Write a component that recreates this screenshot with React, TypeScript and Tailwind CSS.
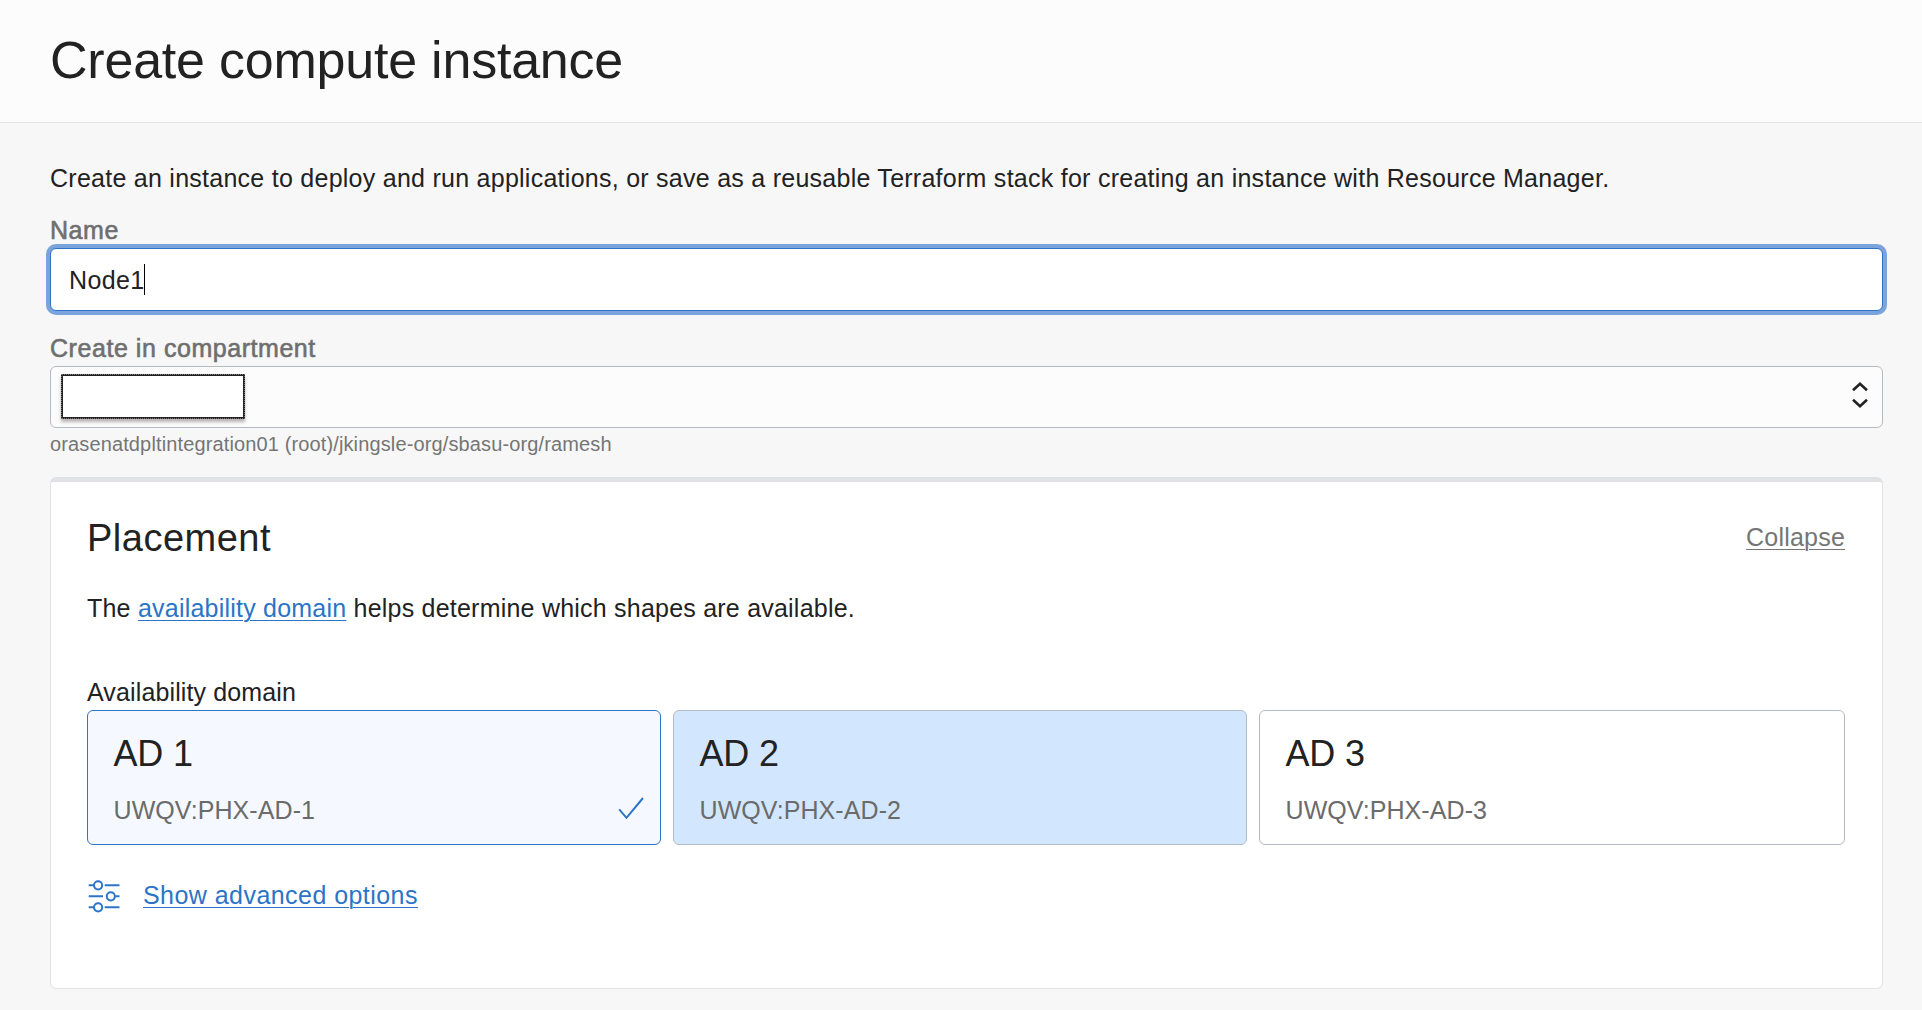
type Domain = { title: string; id: string; box: string; selected?: boolean };

const domains: Domain[] = [
  { title: "AD 1", id: "UWQV:PHX-AD-1", box: "w-[574px] border-[#2b74c7] bg-[#f5f9ff]", selected: true },
  { title: "AD 2", id: "UWQV:PHX-AD-2", box: "w-[574px] border-[#b2bac3] bg-[#d2e7fd]" },
  { title: "AD 3", id: "UWQV:PHX-AD-3", box: "flex-1 border-[#b5b9c1] bg-white" },
];

function CheckIcon() {
  return (
    <svg className="mr-[16px] mb-[23px] shrink-0" width="26" height="24" viewBox="0 0 26 24" fill="none" stroke="#2b74c7" strokeWidth="2">
      <path d="M1.2 12.4 8.5 20.8 25 1" />
    </svg>
  );
}

function SlidersIcon() {
  return (
    <svg className="ml-px shrink-0" width="33" height="33" viewBox="0 0 33 33" fill="none" stroke="#2b74c7" strokeWidth="2">
      <path d="M0.7 5.3H6M16.7 5.3H31.5M0.7 16.3H15M27.5 16.3H31.5M0.7 27.3H6M16.7 27.3H31.5" />
      <circle cx="10.1" cy="5.3" r="4.1" />
      <circle cx="22.8" cy="16.3" r="4.1" />
      <circle cx="10.1" cy="27.3" r="4.1" />
    </svg>
  );
}

function SelectArrows() {
  return (
    <svg className="mr-[14px] mb-[5px]" width="16" height="28" viewBox="0 0 16 28" fill="none" stroke="#222" strokeWidth="2.6">
      <path d="M1 9.3 8 2.8 15 9.3M1 18.7 8 25.2 15 18.7" />
    </svg>
  );
}

function DomainCard({ title, id, box, selected }: Domain) {
  return (
    <div className={`flex h-[135px] items-end justify-between rounded-[6px] border ${box}`}>
      <div className="h-full pt-[23px] pl-[25.5px]">
        <div className="text-[36px] leading-[40px] tracking-[-0.2px]">{title}</div>
        <div className="mt-[21px] tracking-[0.08px] text-[#6b6b6b]">{id}</div>
      </div>
      {selected && <CheckIcon />}
    </div>
  );
}

export default function App() {
  return (
    <div className="h-[1010px] overflow-hidden bg-[#f7f7f7] font-['Liberation_Sans',Arial,sans-serif] text-[25px] leading-[30px] whitespace-nowrap text-[#222]">
      <header className="h-[123px] border-b border-[#e3e3e3] bg-[#fcfcfc] pt-[30px] pl-[50px]">
        <h1 className="text-[52px] leading-[60px] tracking-[-0.22px]">Create compute instance</h1>
      </header>

      <main className="ml-[50px] w-[1833px]">
        <p className="pt-[40px] tracking-[0.26px]">
          Create an instance to deploy and run applications, or save as a reusable Terraform stack for creating an
          instance with Resource Manager.
        </p>

        <div className="mt-[22px] tracking-[0.55px] text-[#6f6f6f] [-webkit-text-stroke:0.6px_#6f6f6f]">Name</div>
        <div className="mt-[3px] flex h-[63px] items-center rounded-[6px] border border-[#2b74c7] bg-white pl-[18px] shadow-[0_0_0_4px_#7ba3dc]">
          <span className="tracking-[0.35px]">Node1</span>
          <span className="h-[31px] w-px bg-black" />
        </div>

        <div className="mt-[22px] tracking-[0.55px] text-[#6f6f6f] [-webkit-text-stroke:0.6px_#6f6f6f]">
          Create in compartment
        </div>
        <div className="mt-[3px] flex h-[62px] items-center justify-between rounded-[6px] border border-[#b5b9c1] bg-[#fcfcfc]">
          <div className="mb-[1px] ml-[10px] h-[45px] w-[184px] border-2 border-[#222] bg-white shadow-[0_3px_3px_rgba(60,40,50,0.35)] outline-1 -outline-offset-1 outline-[#777] outline-dotted" />
          <SelectArrows />
        </div>
        <div className="mt-[4px] text-[20px] leading-[24px] tracking-[0.13px] text-[#757575]">
          orasenatdpltintegration01 (root)/jkingsle-org/sbasu-org/ramesh
        </div>

        <section className="mt-[21px] h-[512px] rounded-[6px] border border-t-[5px] border-[#e1e2e6] bg-white pt-[34px] pr-[37px] pl-[36px]">
          <div className="flex h-[44px] items-start justify-between">
            <h2 className="text-[38px] leading-[44px] tracking-[0.5px]">Placement</h2>
            <a className="mt-[6px] tracking-[0.2px] text-[#757575] underline decoration-1 underline-offset-[3px]">Collapse</a>
          </div>
          <p className="mt-[33px] tracking-[0.22px]">
            The{" "}
            <a className="text-[#2b74c7] underline decoration-1 underline-offset-[3px]">availability domain</a> helps
            determine which shapes are available.
          </p>

          <div className="mt-[54px] tracking-[0.13px]">Availability domain</div>
          <div className="mt-[3px] flex gap-3">
            {domains.map((d) => (
              <DomainCard key={d.id} {...d} />
            ))}
          </div>

          <div className="mt-[35px] flex items-start">
            <SlidersIcon />
            <a className="ml-[22px] tracking-[0.45px] text-[#2b74c7] underline decoration-1 underline-offset-[3px]">
              Show advanced options
            </a>
          </div>
        </section>
      </main>
    </div>
  );
}
